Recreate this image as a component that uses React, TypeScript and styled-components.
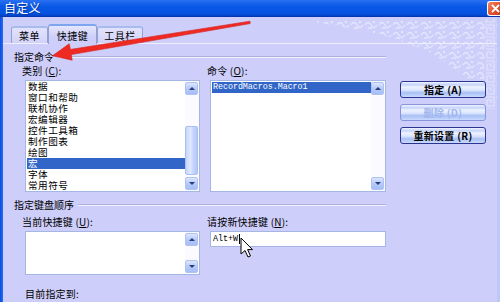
import styled, { createGlobalStyle } from "styled-components";

const GlobalStyle = createGlobalStyle`
  html, body {
    margin: 0;
    padding: 0;
    background: #cecefa;
  }
  * {
    box-sizing: border-box;
  }
`;

const Window = styled.div`
  position: relative;
  width: 500px;
  height: 302px;
  overflow: hidden;
  display: flex;
  flex-direction: column;
  background: #cecefa;
  font-family: "Noto Sans CJK SC", "Liberation Sans", sans-serif;
  font-size: 10px;
  color: #000;
`;

const TitleBar = styled.div`
  flex: none;
  height: 17px;
  display: flex;
  align-items: center;
  justify-content: space-between;
  padding-left: 4px;
  background: linear-gradient(#2a70f2, #0a58e6 40%, #0552e0 85%, #0340c4);
  border-bottom: 1px solid #0336b0;
`;

const Title = styled.span`
  color: #fff;
  font-size: 12px;
  line-height: 14px;
  letter-spacing: 0.2px;
  text-shadow: 1px 1px 0 #0a3aa0;
`;

const CloseButton = styled.div`
  width: 15px;
  height: 15px;
  margin-right: -2px;
  border: 1px solid #fff;
  border-right: none;
  border-radius: 3px 0 0 3px;
  background: linear-gradient(135deg, #f08a6a, #e0502c 55%, #c83a18);
  display: flex;
  align-items: center;
  justify-content: center;
`;

const Body = styled.div`
  position: relative;
  z-index: 1;
  flex: 1;
  display: flex;
`;

const LeftEdge = styled.div`
  width: 3px;
  background: linear-gradient(90deg, #0850e0, #2a6af0);
`;

const RightEdge = styled.div`
  width: 3px;
  background: #bcc8f8;
`;

const Main = styled.div`
  flex: 1;
  display: flex;
  flex-direction: column;
`;

const TabStrip = styled.div`
  height: 19px;
  margin-top: 7px;
  padding-left: 8px;
  display: flex;
  align-items: flex-end;
`;

const Tab = styled.div<{ $active?: boolean; $w: number }>`
  position: relative;
  width: ${({ $w }) => $w}px;
  height: ${({ $active }) => ($active ? 20 : 17)}px;
  margin-bottom: ${({ $active }) => ($active ? -1 : 0)}px;
  display: flex;
  align-items: center;
  justify-content: center;
  padding-top: ${({ $active }) => ($active ? 1 : 0)}px;
  border: 1px solid #94a0d4;
  border-top: 2px solid ${({ $active }) => ($active ? "#7ea6ee" : "#a6bcec")};
  border-bottom: none;
  border-radius: 3px 3px 0 0;
  background: ${({ $active }) =>
    $active
      ? "linear-gradient(#e6e6fe, #cecefa 60%)"
      : "linear-gradient(#e2e2fc, #d2d2f8)"};
  z-index: ${({ $active }) => ($active ? 2 : 1)};
  font-size: 10px;
  line-height: 12px;
  letter-spacing: 0.5px;
`;

const Panel = styled.div`
  flex: 1;
  border-top: 1px solid #eeeeff;
  padding-left: 11px;
  display: flex;
  flex-direction: column;
`;

const GroupHeader = styled.div<{ $top: number }>`
  width: 372px;
  height: 12px;
  margin-top: ${({ $top }) => $top}px;
  display: flex;
  align-items: center;
  gap: 4px;
  font-size: 10px;
  line-height: 12px;
  white-space: nowrap;

  &::after {
    content: "";
    flex: 1;
    height: 0;
    border-top: 1px solid #aeb0dc;
    border-bottom: 1px solid #f2f2ff;
  }
`;

const Row = styled.div<{ $top: number }>`
  display: flex;
  margin-top: ${({ $top }) => $top}px;
`;

const Column = styled.div<{ $left: number; $w: number }>`
  width: ${({ $w }) => $w}px;
  margin-left: ${({ $left }) => $left}px;
  display: flex;
  flex-direction: column;
`;

const Label = styled.div`
  height: 12px;
  font-size: 10px;
  line-height: 12px;
  white-space: nowrap;
  letter-spacing: 0.2px;

  u {
    text-decoration: underline;
  }
`;

const ListBox = styled.div<{ $top: number; $w: number; $h: number }>`
  width: ${({ $w }) => $w}px;
  height: ${({ $h }) => $h}px;
  margin-top: ${({ $top }) => $top}px;
  margin-left: 3px;
  border: 1px solid #a4b6e2;
  background: #fff;
  display: flex;
`;

const Items = styled.div<{ $pad?: number }>`
  flex: 1;
  display: flex;
  flex-direction: column;
  padding-left: 1px;
  padding-top: ${({ $pad }) => $pad ?? 0}px;
`;

const Item = styled.div<{ $selected?: boolean; $mono?: boolean }>`
  height: 11px;
  flex: none;
  padding-left: 1px;
  font-size: ${({ $mono }) => ($mono ? "8.4px" : "9.6px")};
  line-height: 11px;
  white-space: nowrap;
  font-family: ${({ $mono }) =>
    $mono
      ? '"Liberation Mono", "DejaVu Sans Mono", monospace'
      : '"Noto Sans CJK SC", sans-serif'};
  background: ${({ $selected }) => ($selected ? "#3166c8" : "transparent")};
  color: ${({ $selected }) => ($selected ? "#fff" : "#000")};
  letter-spacing: ${({ $mono }) => ($mono ? "-0.05px" : "0.5px")};
`;

const ScrollBar = styled.div`
  width: 14px;
  flex: none;
  display: flex;
  flex-direction: column;
  padding: 1px 1px 1px 0;
  background: #fbfbff;
`;

const ScrollButton = styled.div<{ $down?: boolean }>`
  height: 13px;
  flex: none;
  border: 1px solid #b0c2f0;
  border-radius: 2px;
  background: linear-gradient(#dce6ff, #b6cafa 50%, #a6bef6);
  display: flex;
  align-items: center;
  justify-content: center;

  &::before {
    content: "";
    width: 0;
    height: 0;
    border-left: 3px solid transparent;
    border-right: 3px solid transparent;
    ${({ $down }) =>
      $down ? "border-top: 3px solid #2a3c78;" : "border-bottom: 3px solid #2a3c78;"}
  }
`;

const Track = styled.div`
  flex: 1;
  display: flex;
  flex-direction: column;
`;

const Thumb = styled.div<{ $top: number; $h: number }>`
  margin-top: ${({ $top }) => $top}px;
  height: ${({ $h }) => $h}px;
  border: 1px solid #aabef2;
  border-radius: 2px;
  background: linear-gradient(90deg, #c6d6fc, #dfe8ff 40%, #c2d2fc 70%, #b4c8f8);
`;

const ButtonColumn = styled.div`
  width: 86px;
  margin-left: 14px;
  padding-top: 16px;
  display: flex;
  flex-direction: column;
  gap: 6px;
`;

const DialogButton = styled.div<{ $disabled?: boolean }>`
  height: 17px;
  border: 1px solid ${({ $disabled }) => ($disabled ? "#8a94d8" : "#2c3690")};
  border-radius: 3px;
  background: linear-gradient(
    #f2f4ff 0%,
    #c4d4fa 18%,
    #eef2ff 34%,
    #dae4ff 55%,
    #a8c0f4 72%,
    #cadaff 100%
  );
  display: flex;
  align-items: center;
  justify-content: center;
  font-size: 10px;
  line-height: 12px;
  font-weight: 700;
  letter-spacing: 0.3px;
  color: ${({ $disabled }) => ($disabled ? "#a2b6ee" : "#000")};
`;

const KeyInput = styled.div`
  width: 176px;
  height: 16px;
  margin-top: 3px;
  margin-left: 3px;
  border: 1px solid #a4b6e2;
  background: #fff;
  display: flex;
  align-items: center;
  padding-left: 2px;
  font-family: "Liberation Mono", "DejaVu Sans Mono", monospace;
  font-size: 8.4px;
`;

const Caret = styled.span`
  width: 1px;
  height: 10px;
  margin-left: 1px;
  background: #000;
`;

const Footer = styled.div`
  margin-top: 13px;
  margin-left: 11px;
  height: 12px;
  font-size: 10px;
  line-height: 12px;
  letter-spacing: 0.2px;
`;

const Overlay = styled.svg<{ $z: number }>`
  position: absolute;
  left: 0;
  top: 0;
  width: 500px;
  height: 302px;
  pointer-events: none;
  z-index: ${({ $z }) => $z};
`;

const categories = [
  "数据",
  "窗口和帮助",
  "联机协作",
  "宏编辑器",
  "控件工具箱",
  "制作图表",
  "绘图",
  "宏",
  "字体",
  "常用符号",
];

const Decoration = () => (
  <Overlay $z={0} viewBox="0 0 500 302">
    <defs>
      <pattern id="curls" width="14" height="10" patternUnits="userSpaceOnUse">
        <path
          d="M1 5 q3 -5 6 0 t6 0 M4 9 q2 -3 4 0"
          fill="none"
          stroke="#e4e8fe"
          strokeWidth="1.3"
        />
        <circle cx="10" cy="2" r="1.2" fill="#d6ecfa" />
      </pattern>
      <pattern id="key" width="11" height="12" patternUnits="userSpaceOnUse">
        <path
          d="M1 1 h9 v9 h-7 v-6 h4 v3"
          fill="none"
          stroke="#e2e6fe"
          strokeWidth="1.2"
        />
      </pattern>
    </defs>
    <polygon points="300,19 486,19 484,82 468,78 430,52 380,34" fill="url(#curls)" />
    <rect x="486" y="19" width="11" height="90" fill="url(#key)" opacity="0.9" />
  </Overlay>
);

const Pointers = () => (
  <Overlay $z={5} viewBox="0 0 500 302">
    <polygon
      points="250,21.2 250.2,23.6 71.3,54.6 72.2,60.2 52.5,55.8 69.2,43.8 70.4,49.4"
      fill="#ee2a22"
      stroke="#d41c16"
      strokeWidth="0.6"
      strokeLinejoin="round"
    />
    <path
      d="M241 238 L241 254 L245 250.5 L248 257 L250.5 256 L247.6 249.6 L252.5 249.6 Z"
      fill="#fff"
      stroke="#000"
      strokeWidth="1"
      strokeLinejoin="round"
    />
  </Overlay>
);

export default function App() {
  return (
    <>
      <GlobalStyle />
      <Window>
        <Decoration />
        <TitleBar>
          <Title>自定义</Title>
          <CloseButton>
            <svg width="9" height="9" viewBox="0 0 9 9">
              <path d="M1 1 L8 8 M8 1 L1 8" stroke="#fff" strokeWidth="1.8" />
            </svg>
          </CloseButton>
        </TitleBar>
        <Body>
          <LeftEdge />
          <Main>
            <TabStrip>
              <Tab $w={37}>菜单</Tab>
              <Tab $w={49} $active>
                快捷键
              </Tab>
              <Tab $w={46}>工具栏</Tab>
            </TabStrip>
            <Panel>
              <GroupHeader $top={7}>指定命令</GroupHeader>
              <Row $top={2}>
                <Column $left={8} $w={178}>
                  <Label>
                    类别 (<u>C</u>):
                  </Label>
                  <ListBox $top={3} $w={175} $h={112}>
                    <Items>
                      {categories.map((c) => (
                        <Item key={c} $selected={c === "宏"}>
                          {c}
                        </Item>
                      ))}
                    </Items>
                    <ScrollBar>
                      <ScrollButton />
                      <Track>
                        <Thumb $top={31} $h={49} />
                      </Track>
                      <ScrollButton $down />
                    </ScrollBar>
                  </ListBox>
                </Column>
                <Column $left={7} $w={179}>
                  <Label>
                    命令 (<u>O</u>):
                  </Label>
                  <ListBox $top={3} $w={176} $h={112}>
                    <Items $pad={1}>
                      <Item $selected $mono>
                        RecordMacros.Macro1
                      </Item>
                    </Items>
                    <ScrollBar>
                      <ScrollButton />
                      <Track />
                      <ScrollButton $down />
                    </ScrollBar>
                  </ListBox>
                </Column>
                <ButtonColumn>
                  <DialogButton>指定 (A)</DialogButton>
                  <DialogButton $disabled>删除 (D)</DialogButton>
                  <DialogButton>重新设置 (R)</DialogButton>
                </ButtonColumn>
              </Row>
              <GroupHeader $top={7}>指定键盘顺序</GroupHeader>
              <Row $top={5}>
                <Column $left={8} $w={178}>
                  <Label>
                    当前快捷键 (<u>U</u>):
                  </Label>
                  <ListBox $top={3} $w={175} $h={44}>
                    <Items />
                    <ScrollBar>
                      <ScrollButton />
                      <Track />
                      <ScrollButton $down />
                    </ScrollBar>
                  </ListBox>
                </Column>
                <Column $left={7} $w={179}>
                  <Label>
                    请按新快捷键 (<u>N</u>):
                  </Label>
                  <KeyInput>
                    Alt+W
                    <Caret />
                  </KeyInput>
                </Column>
              </Row>
              <Footer>目前指定到:</Footer>
            </Panel>
          </Main>
          <RightEdge />
        </Body>
        <Pointers />
      </Window>
    </>
  );
}
